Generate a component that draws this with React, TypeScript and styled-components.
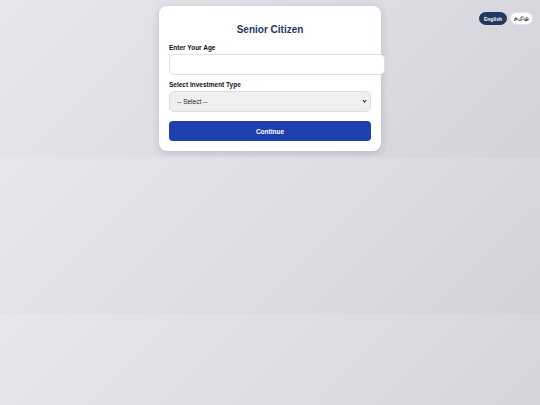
import styled, { createGlobalStyle } from "styled-components";
import { useState } from "react";

const GlobalStyle = createGlobalStyle`
  html {
    background: linear-gradient(135deg, #e6e7eb 0%, #dcdee4 50%, #d1d3d9 100%);
    background-size: 100% 157px;
    background-repeat: repeat;
    min-height: 100%;
  }
  body {
    margin: 0;
    font-family: "Liberation Sans", Arial, sans-serif;
  }
`;

type LangProps = { active?: boolean };

const App = () => {
  const [lang, setLang] = useState<"en" | "ta">("en");
  const [age, setAge] = useState("");

  return (
    <>
      <GlobalStyle />
      <SPage>
        <SCard>
          <STitle>Senior Citizen</STitle>
          <SLabel>Enter Your Age</SLabel>
          <SInput
            type="number"
            value={age}
            onChange={(e) => setAge(e.target.value)}
          />
          <SLabel className="second">Select Investment Type</SLabel>
          <SSelectWrap>
            <select defaultValue="">
              <option value="">-- Select --</option>
              <option value="fd">Fixed Deposit</option>
              <option value="scss">Senior Citizen Savings Scheme</option>
            </select>
          </SSelectWrap>
          <SButton>Continue</SButton>
        </SCard>
      </SPage>
      <SLangToggle>
        <SLangButton active={lang === "en"} onClick={() => setLang("en")}>
          English
        </SLangButton>
        <SLangButton active={lang === "ta"} onClick={() => setLang("ta")}>
          தமிழ்
        </SLangButton>
      </SLangToggle>
    </>
  );
};
export default App;

const SPage = styled.div`
  padding: 6px 0 7px;
  display: flex;
  justify-content: center;
`;

const SCard = styled.div`
  width: 202px;
  padding: 10px;
  background-color: #ffffff;
  border-radius: 8px;
  box-shadow: 0 2px 8px rgba(0, 0, 0, 0.14);
`;

const STitle = styled.h2`
  margin: 8px 0 0;
  font-size: 10px;
  line-height: 12px;
  font-weight: bold;
  text-align: center;
  color: #22385f;
`;

const SLabel = styled.label`
  display: block;
  margin-top: 7.5px;
  margin-bottom: 2.5px;
  font-size: 6.5px;
  line-height: 8px;
  font-weight: bold;
  color: #111111;

  &.second {
    margin-top: 5.5px;
  }
`;

const SInput = styled.input`
  display: block;
  width: 100%;
  height: 19px;
  padding: 0 6px;
  border: 1px solid #e0e0e0;
  border-radius: 5px;
  font-size: 6.5px;
  font-family: inherit;
  background: #ffffff;
  outline: none;
  box-sizing: content-box;
`;

const SSelectWrap = styled.div`
  position: relative;
  height: 21px;

  & select {
    appearance: none;
    display: block;
    width: 100%;
    height: 21px;
    padding: 0 7px;
    border: 1px solid #dddddd;
    border-radius: 5px;
    background-color: #efefef;
    font-size: 6.5px;
    font-family: inherit;
    color: #222222;
  }

  /* small chevron like the native one */
  &::after {
    content: "";
    position: absolute;
    right: 5px;
    top: 8px;
    width: 2px;
    height: 2px;
    border-right: 1.2px solid #222222;
    border-bottom: 1.2px solid #222222;
    transform: rotate(45deg);
    pointer-events: none;
  }
`;

const SButton = styled.button`
  display: block;
  width: 100%;
  height: 20px;
  margin-top: 9px;
  border: none;
  border-radius: 4px;
  background-color: #1e40af;
  color: #ffffff;
  font-size: 6.5px;
  font-weight: bold;
  font-family: inherit;
  cursor: pointer;
`;

const SLangToggle = styled.div`
  position: absolute;
  top: 12px;
  right: 7px;
  display: flex;
  gap: 3px;
`;

const SLangButton = styled.button<LangProps>`
  height: 13px;
  padding: 0 ${(p) => (p.active ? "4px" : "3px")};
  border-radius: 7px;
  border: 1px solid ${(p) => (p.active ? "#22385f" : "#e2e4e8")};
  background-color: ${(p) => (p.active ? "#22385f" : "#ffffff")};
  color: ${(p) => (p.active ? "#ffffff" : "#222222")};
  font-size: ${(p) => (p.active ? "5px" : "6px")};
  font-weight: bold;
  font-family: "Liberation Sans", "Noto Sans", sans-serif;
  cursor: pointer;
`;
